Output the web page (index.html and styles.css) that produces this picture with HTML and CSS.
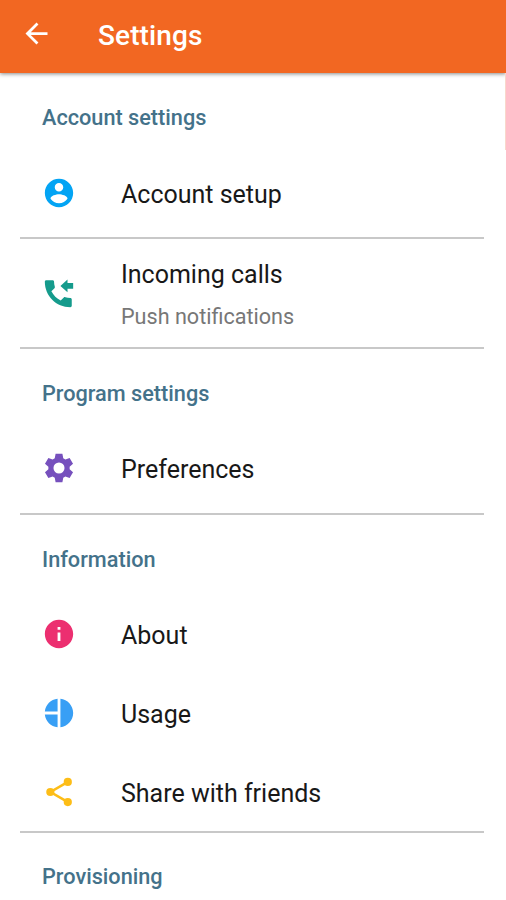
FILE: index.html
```html
<!DOCTYPE html>
<html lang="en"><head><meta charset="utf-8"><title>Settings</title><link rel="stylesheet" href="styles.css"></head>
<body>
<header class="bar"><svg class="back" viewBox="0 0 24 24"><path d="M20 11H7.83l5.59-5.59L12 4l-8 8 8 8 1.41-1.41L7.83 13H20v-2z"/></svg><h1>Settings</h1></header>
<main>
<section class="account"><h2>Account settings</h2>
<div class="row"><svg class="icon blue" viewBox="0 0 24 24"><path d="M12 2C6.48 2 2 6.48 2 12s4.480 10 10 10 10-4.480 10-10S17.520 2 12 2zm0 3c1.660 0 3 1.340 3 3s-1.340 3-3 3-3-1.340-3-3 1.340-3 3-3zm0 14.200c-2.500 0-4.710-1.280-6-3.220.030-1.990 4-3.080 6-3.080 1.990 0 5.970 1.090 6 3.080-1.290 1.940-3.500 3.220-6 3.220z"/></svg><span class="label">Account setup</span></div></section>
<section class="calls"><div class="row"><svg class="icon teal" viewBox="0 0 24 24"><path d="M20 15.500c-1.250 0-2.450-.2-3.570-.57-.350-.110-.740-.030-1.020.240l-2.200 2.200c-2.830-1.440-5.150-3.750-6.590-6.590l2.200-2.200c.280-.270.360-.660.250-1.010C8.700 6.450 8.500 5.250 8.500 4c0-.550-.450-1-1-1H3c-.550 0-1 .450-1 1 0 9.940 8.060 18 18 18 .550 0 1-.450 1-1v-4.500c0-.550-.450-1-1-1zM18 9h4V5h-4V2.500L13 7l5 4.500V9z"/></svg><div class="text"><span class="label">Incoming calls</span><span class="note">Push notifications</span></div></div></section>
<section class="program"><h2>Program settings</h2>
<div class="row"><svg class="icon purple" viewBox="0 0 24 24"><path fill-rule="evenodd" d="M9.600 2h4.800l.6 3.100 1.500.850 3-1.050 2.400 4.150-2.400 2.050v1.800l2.400 2.050-2.400 4.150-3-1.050-1.500.850-.6 3.100H9.600L9 18.900l-1.500-.850-3 1.050-2.400-4.150 2.400-2.050v-1.800L2.100 9.050 4.500 4.900l3 1.050L9 5.100zM12 8.100a3.900 3.900 0 1 0 0 7.800 3.900 3.900 0 0 0 0-7.800z"/></svg><span class="label">Preferences</span></div></section>
<section class="info"><h2>Information</h2>
<div class="row"><svg class="icon pink" viewBox="0 0 24 24"><path d="M12 2C6.480 2 2 6.480 2 12s4.480 10 10 10 10-4.480 10-10S17.520 2 12 2zm1 15h-2v-6h2v6zm0-8h-2V7h2v2z"/></svg><span class="label">About</span></div>
<div class="row"><svg class="icon azure" viewBox="0 0 24 24"><path d="M11 2v9H2c.500-4.800 4.200-8.500 9-9zm0 11v9c-4.800-.500-8.500-4.200-9-9zm2-11c5 .500 9 4.800 9 10s-4 9.500-9 10z"/></svg><span class="label">Usage</span></div>
<div class="row"><svg class="icon yellow" viewBox="0 0 24 24"><path d="M18 5 6 12l12 7" fill="none" stroke="currentColor" stroke-width="1.8"/><circle cx="18.200" cy="4.900" r="2.900"/><circle cx="5.900" cy="12" r="2.900"/><circle cx="18.200" cy="19.100" r="2.900"/></svg><span class="label">Share with friends</span></div></section>
<section class="last"><h2>Provisioning</h2></section>
</main></body></html>
```
FILE: styles.css
```css
* { box-sizing: border-box; }
body { margin: 0; height: 900px; overflow: hidden; background: #fff; font-family: Roboto, sans-serif; color: #181818; }
.bar { height: 73px; background: #f26722; color: #fff; display: flex; align-items: center; padding: 0 0 4px 20px; box-shadow: 0 1px 4px #0007; }
.back { width: 33px; height: 33px; margin-top: -2px; fill: currentColor; }
h1 { margin: 0 0 0 45px; padding-top: 3px; font-size: 28px; font-weight: 500; line-height: 32px; letter-spacing: 0.1px; }
main { background: linear-gradient(#f9d8cb, #f9d8cb) right top / 1px 77px no-repeat; }
section { margin: 0 22px 0 20px; border-bottom: 2px solid #c8c8c8; }
h2 { margin: 0; padding-left: 22px; height: 80px; line-height: 90px; font-size: 21.7px; font-weight: 500; color: #44728a; }
.row { display: flex; align-items: center; height: 79px; padding-left: 22px; }
.icon { width: 34px; height: 34px; margin-right: 45px; fill: currentColor; }
.label { display: block; padding-top: 4px; font-size: 25px; line-height: 32px; }
.note { display: block; margin-top: 13px; font-size: 21.600px; line-height: 26px; color: #777; }
.account { height: 166px; }
.calls { height: 110px; }
.calls .row { height: 108px; }
.calls .label { padding-top: 3px; }
.program { height: 166px; }
.program .row { height: 78px; }
.info { height: 318px; }
.info .row { height: 78.800px; }
.last { margin-top: -1px; border: 0; }
.blue { color: #03a4f4; }
.teal { color: #159b8c; }
.purple { color: #7650bd; }
.pink { color: #ec2f70; }
.azure { color: #389ff5; }
.yellow { color: #fdbd17; }
```
